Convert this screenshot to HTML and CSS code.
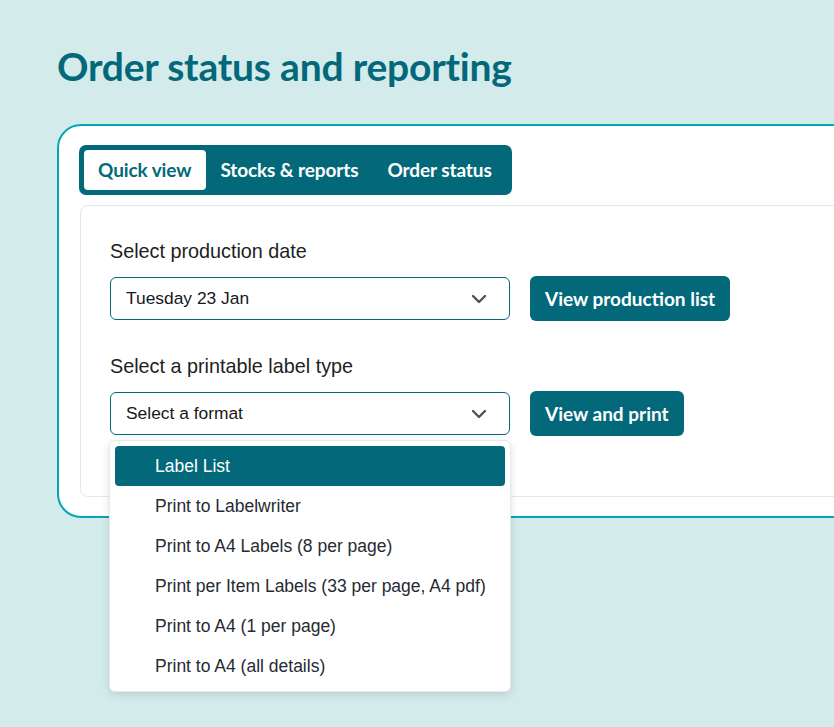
FILE: index.html
```html
<!DOCTYPE html>
<html lang="en">
<head>
<meta charset="utf-8">
<title>Order status and reporting</title>
<link rel="stylesheet" href="styles.css">
</head>
<body>
<main class="page">
  <h1 class="title">Order status and reporting</h1>
  <section class="card">
    <nav class="tabs">
      <span class="tab tab-active">Quick view</span>
      <span class="tab">Stocks &amp; reports</span>
      <span class="tab">Order status</span>
    </nav>
    <div class="panel">
      <div class="group">
        <div class="label">Select production date</div>
        <div class="row">
          <div class="select">
            <span>Tuesday 23 Jan</span>
            <svg class="chev" width="16" height="10" viewBox="0 0 16 10"><path d="M2 2 L8 8 L14 2" fill="none" stroke="#4b5260" stroke-width="2.4" stroke-linecap="round" stroke-linejoin="round"/></svg>
          </div>
          <button class="btn">View production list</button>
        </div>
      </div>
      <div class="group">
        <div class="label">Select a printable label type</div>
        <div class="row">
          <div class="select-wrap">
            <div class="select">
              <span>Select a format</span>
              <svg class="chev" width="16" height="10" viewBox="0 0 16 10"><path d="M2 2 L8 8 L14 2" fill="none" stroke="#4b5260" stroke-width="2.4" stroke-linecap="round" stroke-linejoin="round"/></svg>
            </div>
            <ul class="menu">
              <li class="opt opt-active">Label List</li>
              <li class="opt">Print to Labelwriter</li>
              <li class="opt">Print to A4 Labels (8 per page)</li>
              <li class="opt">Print per Item Labels (33 per page, A4 pdf)</li>
              <li class="opt">Print to A4 (1 per page)</li>
              <li class="opt">Print to A4 (all details)</li>
            </ul>
          </div>
          <button class="btn">View and print</button>
        </div>
      </div>
    </div>
  </section>
</main>
</body>
</html>
```

FILE: styles.css
```css
html, body {
  margin: 0;
  padding: 0;
  background: #d4ebec;
  overflow: hidden;
}
body {
  font-family: "Liberation Sans", Arial, sans-serif;
  color: #1f2329;
  height: 727px;
}
.page {
  padding: 0 0 0 57px;
}
.title {
  margin: 0;
  padding-top: 43px;
  box-sizing: border-box;
  font-family: Lato, "Open Sans", sans-serif;
  font-weight: 700;
  font-size: 39px;
  line-height: 46px;
  color: #03697a;
  letter-spacing: -0.2px;
  height: 124px;
}
.card {
  width: 900px;
  background: #fff;
  border: 2px solid #00a8b6;
  border-radius: 24px;
  padding: 19px 0 19px 20px;
}
.tabs {
  display: flex;
  width: fit-content;
  background: #03697a;
  border-radius: 7px;
  padding: 5px;
}
.tab {
  height: 40px;
  line-height: 40px;
  padding: 0 15px 0 14px;
  font-family: Lato, "Open Sans", sans-serif;
  font-weight: 700;
  font-size: 19px;
  letter-spacing: -0.1px;
  color: #fff;
  border-radius: 4px;
}
.tab-active {
  background: #fff;
  color: #03697a;
}
.panel {
  margin-top: 10px;
  margin-left: 1px;
  border: 1px solid #e3e7f0;
  border-radius: 8px;
  padding: 33px 30px 27px 29px;
}
.group {
  margin-bottom: 33px;
}
.label {
  font-size: 19.8px;
  line-height: 25px;
  margin-bottom: 12px;
  color: #1c1f24;
}
.row {
  display: flex;
  align-items: center;
  gap: 20px;
}
.select-wrap {
  position: relative;
}
.select {
  width: 400px;
  height: 43px;
  box-sizing: border-box;
  border: 1px solid #03697a;
  border-radius: 6px;
  display: flex;
  align-items: center;
  justify-content: space-between;
  padding: 0 22px 0 15px;
  font-size: 17.4px;
  color: #15181c;
}
.chev {
  display: block;
}
.btn {
  height: 45px;
  border: none;
  border-radius: 6px;
  background: #03697a;
  color: #fff;
  font-family: Lato, "Open Sans", sans-serif;
  font-weight: 700;
  font-size: 19px;
  padding: 0 15px;
}
.menu {
  position: absolute;
  top: 48px;
  left: -1px;
  width: 402px;
  box-sizing: border-box;
  margin: 0;
  padding: 5px;
  list-style: none;
  background: #fff;
  border: 1px solid #e6e9f0;
  border-radius: 6px;
  box-shadow: 0 3px 8px rgba(0, 0, 0, 0.12);
  z-index: 5;
}
.opt {
  height: 40px;
  line-height: 40px;
  padding-left: 40px;
  font-size: 17.5px;
  color: #262b33;
  border-radius: 4px;
}
.opt-active {
  background: #03697a;
  color: #fff;
}
```
